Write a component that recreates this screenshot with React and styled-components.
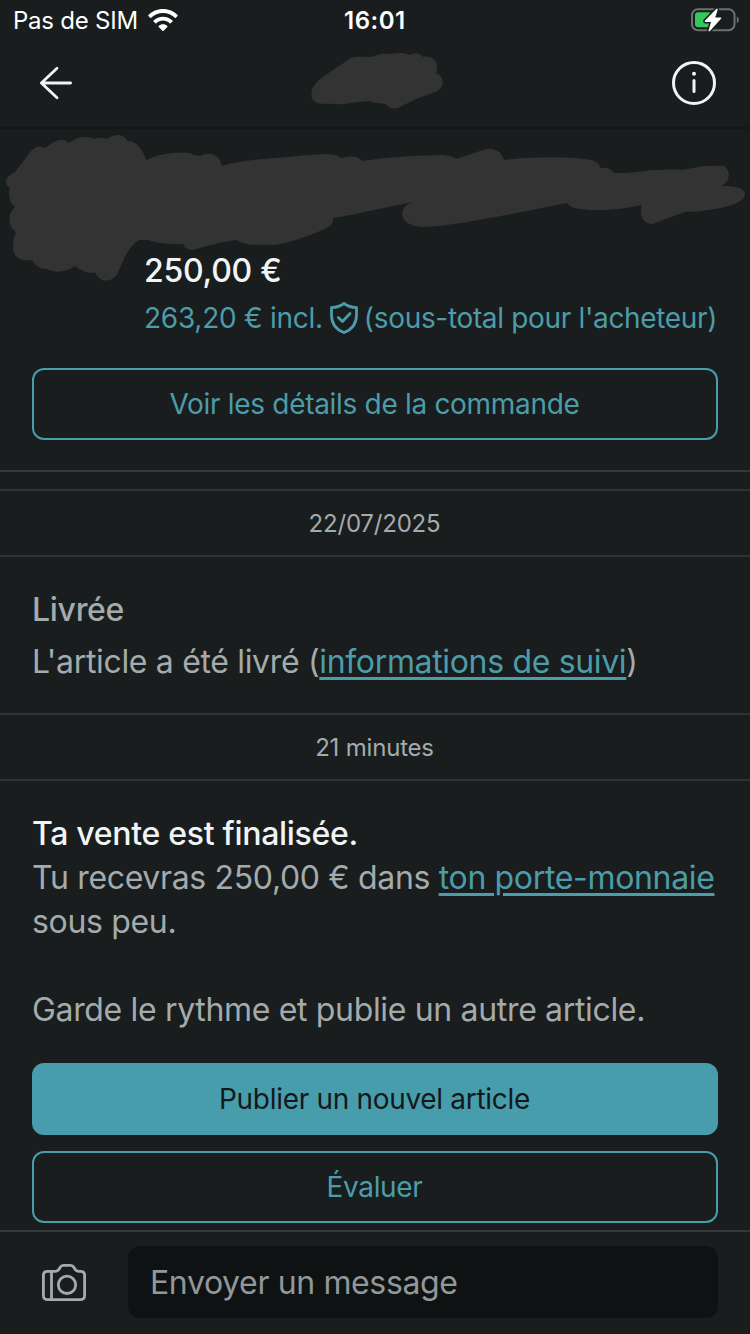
import styled, { createGlobalStyle } from 'styled-components';

const GlobalStyle = createGlobalStyle`
  * {
    box-sizing: border-box;
  }

  body {
    margin: 0;
    background: #191d1e;
    font-family: Inter, 'Liberation Sans', sans-serif;
  }

  p, h2 {
    margin: 0;
  }

  svg {
    display: block;
    flex-shrink: 0;
  }
`;

const Screen = styled.div`
  width: 750px;
  height: 1334px;
  display: flex;
  flex-direction: column;
  overflow: hidden;
  background: #191d1e;
  color: #a4abac;
`;

const StatusBar = styled.div`
  height: 40px;
  padding: 0 9px 0 13px;
  display: grid;
  grid-template-columns: 331px auto 1fr;
  align-items: center;
  color: #fff;
`;

const Carrier = styled.div`
  display: flex;
  align-items: center;
  gap: 10px;
  font-size: 24px;
  line-height: 40px;
  letter-spacing: -0.22px;
  white-space: nowrap;

  span {
    padding-top: 1px;
  }
`;

const Clock = styled.div`
  padding-top: 1px;
  font-size: 24px;
  font-weight: 600;
  line-height: 40px;
  letter-spacing: 0.5px;
`;

const Battery = styled.div`
  padding-bottom: 2px;
  display: flex;
  justify-content: flex-end;
`;

const Header = styled.header`
  height: 89px;
  padding: 0 34px 2px 38px;
  display: flex;
  align-items: center;
  justify-content: space-between;
  border-bottom: 2px solid #151819;
`;

const NameWrapper = styled.div`
  padding: 0 0 3px 8px;
`;

const ItemCard = styled.section`
  position: relative;
  height: 343px;
  padding: 120px 32px 0;
  border-bottom: 2px solid #353839;
`;

const Scribble = styled.svg`
  position: absolute;
  top: 0;
  left: 0;
`;

const Price = styled.p`
  position: relative;
  padding-left: 112px;
  font-size: 32px;
  font-weight: 500;
  line-height: 44px;
  letter-spacing: -0.25px;
  color: #f0f4f5;
`;

const Total = styled.div`
  height: 44px;
  margin: 3px 0 28px;
  padding-left: 112px;
  display: flex;
  align-items: center;
  font-size: 28px;
  white-space: nowrap;
  color: #4c9caa;

  svg {
    margin: 0 6px 0 7px;
  }
`;

const TotalText = styled.span`
  letter-spacing: ${(props) => props.$spacing}px;
`;

const Button = styled.button`
  width: 100%;
  height: 72px;
  padding: 0 1px 0 0;
  display: flex;
  align-items: center;
  justify-content: center;
  border: 2px solid #479dab;
  border-radius: 12px;
  background: ${(props) => (props.$filled ? '#479dab' : 'transparent')};
  color: ${(props) => (props.$filled ? '#13191b' : '#4c9caa')};
  font-family: inherit;
  font-size: 28px;
  letter-spacing: -0.31px;
`;

const DateRow = styled.div`
  height: 68px;
  padding-right: 1px;
  display: flex;
  align-items: center;
  justify-content: center;
  border-top: 2px solid #303435;
  border-bottom: 2px solid #303435;
  font-size: 24px;
  letter-spacing: -0.2px;
`;

const Spacer = styled.div`
  height: 17px;
`;

const Delivered = styled.section`
  height: 156px;
  padding: 31px 32px 0;
`;

const Title = styled.h2`
  font-size: 32px;
  font-weight: 500;
  line-height: 44px;
  letter-spacing: -0.3px;
  color: ${(props) => (props.$bright ? '#f0f4f5' : '#a4abac')};
`;

const Line = styled.p`
  min-height: 44px;
  margin-top: ${(props) => (props.$spaced ? '8px' : 0)};
  font-size: 32px;
  line-height: 44px;
  letter-spacing: -0.335px;
  white-space: nowrap;
`;

const Link = styled.span`
  color: #4c9caa;
  text-decoration: underline;
  text-decoration-thickness: 3px;
  text-underline-offset: 4px;
`;

const Sale = styled.section`
  height: 449px;
  padding: 31px 32px 0;
`;

const Actions = styled.div`
  margin-top: 31px;
  display: flex;
  flex-direction: column;
  gap: 16px;
`;

const Composer = styled.footer`
  height: 104px;
  padding: 14px 32px 0 42px;
  display: flex;
  justify-content: space-between;
  border-top: 2px solid #353839;
`;

const CameraButton = styled.div`
  height: 71px;
  display: flex;
  align-items: center;
`;

const MessageField = styled.div`
  width: 590px;
  height: 72px;
  padding-left: 22px;
  border-radius: 12px;
  background: #0f1213;
  font-size: 32px;
  line-height: 74px;
  letter-spacing: -0.37px;
  color: #929798;
`;

const WifiIcon = () => (
  <svg width="30" height="23" viewBox="0 0 30 23" fill="#fff">
    <path d="M15 0C9.200 0 4 2.300 0.400 6Q0 6.500 0.400 7L2.200 8.800Q2.700 9.200 3.200 8.700C6.300 5.700 10.400 3.900 15 3.900S23.700 5.700 26.800 8.700Q27.300 9.200 27.800 8.800L29.600 7Q30 6.500 29.600 6C26 2.300 20.800 0 15 0Z" />
    <path d="M15 7.700C11.300 7.700 8 9.100 5.500 11.400Q5 11.900 5.500 12.400L7.400 14.200Q7.900 14.600 8.400 14.200C10.200 12.600 12.500 11.600 15 11.600S19.800 12.600 21.600 14.200Q22.100 14.600 22.600 14.200L24.500 12.400Q25 11.900 24.500 11.400C22 9.100 18.700 7.700 15 7.700Z" />
    <path d="M15 15.300C13.300 15.300 11.800 15.900 10.700 16.900Q10.200 17.400 10.700 17.900L14.400 21.700Q15 22.300 15.600 21.700L19.300 17.900Q19.800 17.400 19.300 16.900C18.200 15.900 16.700 15.300 15 15.300Z" />
  </svg>
);

const BatteryIcon = () => (
  <svg width="50" height="26" viewBox="0 0 50 26">
    <rect x="1" y="2.200" width="42.500" height="21" rx="6" fill="none" stroke="#6d7071" strokeWidth="2" />
    <path d="M45.800 9.200Q48 10.500 48 12.700T45.800 16.200Z" fill="#6d7071" />
    <rect x="4" y="5.200" width="17" height="15" rx="3" fill="#34c759" />
    <path
      d="M25.200 1.900L13.800 13.700Q13.300 14.900 14.400 14.900H20L17.500 23.400Q17.500 25.100 19 24L30.200 11.600Q30.800 10.400 29.600 10.400H24.200L26.700 2.800Q26.500 0.900 25.200 1.900Z"
      fill="#fff"
      stroke="#191d1e"
      strokeWidth="3"
      paintOrder="stroke"
    />
  </svg>
);

const BackIcon = () => (
  <svg width="36" height="36" viewBox="0 0 36 36" fill="none" stroke="#f0f4f5" strokeWidth="2.800" strokeLinecap="round" strokeLinejoin="round">
    <path d="M32.600 18H3.400M19 3.300L3.400 18L19 32.700" />
  </svg>
);

const InfoIcon = () => (
  <svg width="44" height="44" viewBox="0 0 44 44" fill="none" stroke="#f0f4f5">
    <circle cx="22" cy="22" r="20.500" strokeWidth="3" />
    <path d="M22 19.500V30.500" strokeWidth="3" strokeLinecap="round" />
    <circle cx="22" cy="12.800" r="2" fill="#f0f4f5" stroke="none" />
  </svg>
);

const NameScribble = () => (
  <svg width="132" height="56" viewBox="311 53 132 56" fill="#333">
    <path d="M311.500 94C311 86 318 81 324 76L345 62C350 57 354 56 370 57C377 56 380 52 391 54C399 52 405 53 410 55C416 52 421 54 423 57C431 55 438 61 437 68Q437 71 435.500 73C442 75 444 81 442 86C439 92 432 93 427 95C417 98 408 103 402 106C396 110 389 109 386 104C380 103 374 103 370 101L349 103C341 106 333 103 323 104C316 104 311 100 311.500 94Z" />
  </svg>
);

const ShieldIcon = () => (
  <svg width="28" height="32" viewBox="0 0 28 32" fill="none" stroke="#4c9caa" strokeWidth="2.800" strokeLinecap="round" strokeLinejoin="round">
    <path d="M14 1.500C10.500 4 6 5.500 1.500 5.600V13C1.500 21.500 6 27.500 14 30.500C22 27.500 26.500 21.500 26.500 13V5.600C22 5.500 17.500 4 14 1.500Z" />
    <path d="M8.300 15.500L12.500 19.500L20 11.500" />
  </svg>
);

const CameraIcon = () => (
  <svg width="44" height="38" viewBox="0 0 44 38" fill="none" stroke="#a4abac" strokeWidth="2.800" strokeLinejoin="round">
    <path d="M5.300 8.300H13.500C16.500 8.300 17 6.500 18 4.500Q19.200 2.300 21.500 2.300H28.500Q30.800 2.300 32 4.500C33 6.500 33.500 8.300 36.500 8.300H38.700Q42.600 8.300 42.600 12.300V32.600Q42.600 36.600 38.700 36.600H5.300Q1.400 36.600 1.400 32.600V12.300Q1.400 8.300 5.300 8.300ZM9.500 8.300V36.600" />
    <circle cx="25" cy="21.800" r="8.700" />
  </svg>
);

const App = () => {
  return (
    <>
      <GlobalStyle />
      <Screen>
        <StatusBar>
          <Carrier>
            <span>Pas de SIM</span>
            <WifiIcon />
          </Carrier>
          <Clock>16:01</Clock>
          <Battery>
            <BatteryIcon />
          </Battery>
        </StatusBar>

        <Header>
          <BackIcon />
          <NameWrapper>
            <NameScribble />
          </NameWrapper>
          <InfoIcon />
        </Header>

        <ItemCard>
          <Scribble width="750" height="160" viewBox="0 129 750 160" fill="#333">
            <path d="M6 182Q6 176 15 172L31 151Q38 144 45 148C54 142 61 136 69 143C79 136 88 136 94 139Q102 136 107 139C116 133 124 134 127 141C138 141 144 152 146 160C158 154 177 151 190 153L193 155L200 156C209 151 220 154 222 166C244 159 260 160 285 157C307 156 333 151 341 158Q356 154 362 161C390 157 407 156 440 155Q451 155 456 159L483 150C494 146 502 152 504 160C530 157 566 156 592 160Q600 163 600 168Q610 167 614 173C637 174 650 168 683 170C698 166 713 165 723 166C730 168 732 181 721 186C737 186 745 188 745 195C743 205 714 211 685 212L655 223C645 227 638 216 642 205C615 211 571 213 567 203C535 209 462 225 425 227C406 228 400 217 403 210Q406 203 414 202C390 206 369 212 333 218Q335 224 325 229C309 236 292 242 275 245C260 244 245 247 237 240C219 242 208 246 193 250Q185 250 183 244C170 244 158 244 148 240H139C123 251 122 269 115 277C107 284 98 280 95 272C89 275 81 270 75 266C65 273 55 273 47 269C40 269 36 266 32 260C22 262 13 258 13 248C13 241 14 236 16 232C8 226 7 214 15 207C9 202 8 195 10 188Q6 186 6 182Z" />
          </Scribble>
          <Price>250,00 €</Price>
          <Total>
            <TotalText $spacing={-0.26}>263,20 € incl.</TotalText>
            <ShieldIcon />
            <TotalText $spacing={-0.33}>(sous-total pour l'acheteur)</TotalText>
          </Total>
          <Button>Voir les détails de la commande</Button>
        </ItemCard>

        <Spacer />
        <DateRow>22/07/2025</DateRow>

        <Delivered>
          <Title>Livrée</Title>
          <Line $spaced>
            L'article a été livré (<Link>informations de suivi</Link>)
          </Line>
        </Delivered>

        <DateRow>21 minutes</DateRow>

        <Sale>
          <Title $bright>Ta vente est finalisée.</Title>
          <Line>
            Tu recevras 250,00 € dans <Link>ton porte-monnaie</Link>
          </Line>
          <Line>sous peu.</Line>
          <Line />
          <Line>Garde le rythme et publie un autre article.</Line>
          <Actions>
            <Button $filled>Publier un nouvel article</Button>
            <Button>Évaluer</Button>
          </Actions>
        </Sale>

        <Composer>
          <CameraButton>
            <CameraIcon />
          </CameraButton>
          <MessageField>Envoyer un message</MessageField>
        </Composer>
      </Screen>
    </>
  );
};

export default App;
